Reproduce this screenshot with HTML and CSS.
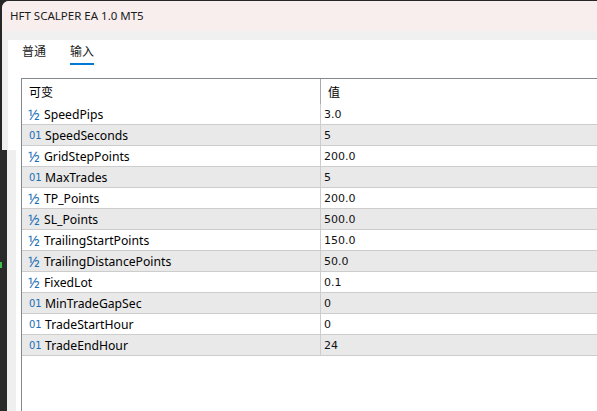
FILE: index.html
```html
<!DOCTYPE html>
<html lang="zh">
<head>
  <meta charset="UTF-8" />
  <title>HFT SCALPER EA 1.0 MT5</title>
  <link rel="stylesheet" href="styles.css">
</head>
<body>
  <div class="side"></div>
  <div class="window">
    <div class="titlebar">HFT SCALPER EA 1.0 MT5</div>
    <div class="content">
      <div class="panel">
        <div class="tabs">
          <span class="tab">普通</span>
          <span class="tab active">输入</span>
        </div>
        <div class="grid">
          <div class="grid-head">
            <div class="col-name">可变</div>
            <div class="col-val">值</div>
          </div>
          <div id="rows"></div>
        </div>
      </div>
    </div>
  </div>
  <!-- bit of the window behind, showing at the left edge -->
  <div class="edge"><span class="edge-mark"></span></div>

  <script>
    const inputs = [
      { type: "d", name: "SpeedPips", value: "3.0" },
      { type: "i", name: "SpeedSeconds", value: "5" },
      { type: "d", name: "GridStepPoints", value: "200.0" },
      { type: "i", name: "MaxTrades", value: "5" },
      { type: "d", name: "TP_Points", value: "200.0" },
      { type: "d", name: "SL_Points", value: "500.0" },
      { type: "d", name: "TrailingStartPoints", value: "150.0" },
      { type: "d", name: "TrailingDistancePoints", value: "50.0" },
      { type: "d", name: "FixedLot", value: "0.1" },
      { type: "i", name: "MinTradeGapSec", value: "0" },
      { type: "i", name: "TradeStartHour", value: "0" },
      { type: "i", name: "TradeEndHour", value: "24" }
    ];

    const rows = document.getElementById("rows");
    inputs.forEach((item, i) => {
      const row = document.createElement("div");
      row.className = "row" + (i % 2 ? " alt" : "");
      const icon = item.type === "d"
        ? '<span class="ico half">½</span>'
        : '<span class="ico int">01</span>';
      row.innerHTML = `
        <div class="col-name">${icon}<span>${item.name}</span></div>
        <div class="col-val">${item.value}</div>
      `;
      rows.appendChild(row);
    });
  </script>
</body>
</html>
```

FILE: styles.css
```css
:root {
  --title-bg: #f9eeee;
  --frame: #f0f0f0;
  --border: #828790;
  --line: #cdcdcd;
  --alt: #e9e9e9;
  --blue: #1a6fb5;
  --accent: #0078d4;
}

html, body {
  margin: 0;
  height: 100%;
  overflow: hidden;
}

body {
  background: #262626;
  font-family: "Noto Sans", "Noto Sans CJK SC", sans-serif;
  color: #000;
  display: flex;
  position: relative;
}

.side {
  width: 2px;
}

.edge {
  position: absolute;
  left: 0;
  top: 150px;
  bottom: 0;
  width: 7px;
  background: #2a2a2a;
  border-right: 9px solid #efefef;
}

.edge-mark {
  position: absolute;
  left: 0;
  top: 112px;
  width: 2px;
  height: 6px;
  background: #3bbf4a;
}

.window {
  flex: 1;
  margin-top: 1px;
  background: var(--frame);
  border-top-left-radius: 7px;
  display: flex;
  flex-direction: column;
  overflow: hidden;
}

.titlebar {
  height: 30px;
  line-height: 30px;
  padding-left: 8px;
  background: var(--title-bg);
  font-size: 11.5px;
  color: #1b1b1b;
}

.content {
  flex: 1;
  padding: 9px 0 0 6px;
  display: flex;
}

.panel {
  flex: 1;
  background: #fff;
  display: flex;
  flex-direction: column;
}

.tabs {
  display: flex;
  gap: 24px;
  padding: 3px 0 0 14px;
  height: 38px;
  box-sizing: border-box;
}

.tab {
  font-size: 12px;
  line-height: 18px;
  height: 22px;
  box-sizing: border-box;
  color: #1a1a1a;
}

.tab.active {
  border-bottom: 2px solid var(--accent);
}

.grid {
  flex: 1;
  margin-left: 13px;
  border-top: 1px solid var(--border);
  border-left: 1px solid var(--border);
}

.grid-head {
  display: flex;
  height: 25px;
  font-size: 12px;
  align-items: center;
}

.grid-head .col-name {
  padding-left: 7px;
  align-self: stretch;
  display: flex;
  align-items: center;
  border-right: 1px solid #a9a9a9;
}

.grid-head .col-val {
  padding-left: 7px;
}

.col-name {
  width: 299px;
  box-sizing: border-box;
  flex-shrink: 0;
}

.col-val {
  flex: 1;
}

.row {
  display: flex;
  height: 21px;
  box-sizing: border-box;
  border-bottom: 1px solid var(--line);
  font-size: 12.2px;
}

.row.alt {
  background: var(--alt);
}

.row .col-name {
  display: flex;
  align-items: center;
  padding-left: 6px;
  border-right: 1px solid var(--line);
}

.row .col-val {
  display: flex;
  align-items: center;
  padding-left: 3px;
  font-family: "DejaVu Sans", sans-serif;
  font-size: 11px;
  color: #111;
}

.ico {
  width: 16px;
  color: var(--blue);
  flex-shrink: 0;
}

.ico.half {
  font-size: 15px;
  line-height: 1;
}

.ico.int {
  font-size: 10px;
  font-family: "DejaVu Sans", sans-serif;
  padding-left: 1px;
}
```
